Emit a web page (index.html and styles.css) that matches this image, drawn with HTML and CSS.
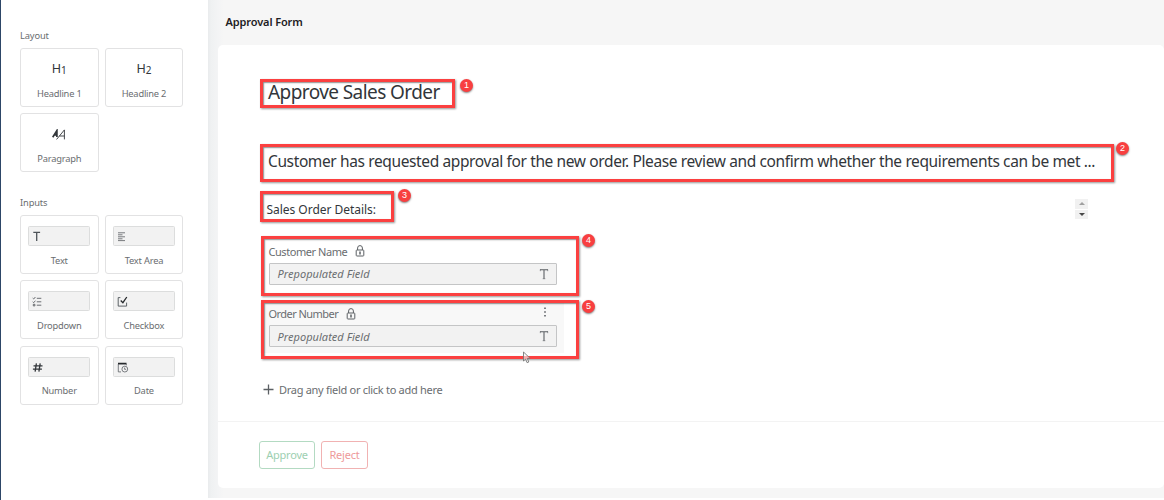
FILE: index.html
```html
<!DOCTYPE html>
<html lang="en">
<head>
<meta charset="utf-8">
<title>Approval Form</title>
<link rel="stylesheet" href="styles.css">
</head>
<body>
<div class="app">
  <aside class="palette">
    <h2 class="group-title">Layout</h2>
    <div class="tiles">
      <div class="tile"><div class="glyph">H<span class="sub">1</span></div><span class="tile-label">Headline 1</span></div>
      <div class="tile"><div class="glyph">H<span class="sub">2</span></div><span class="tile-label">Headline 2</span></div>
      <div class="tile"><div class="glyph"><svg class="para" viewBox="0 0 14 11" width="14" height="11" fill="none" stroke="#32363a"><path d="M.7 8.2 4.9 1.6V8M1.8 5.8H5" stroke-width="1.7"/><path d="M4.6 10.4 12.4.9V10.4M7.4 7h5" stroke-width=".9"/></svg></div><span class="tile-label">Paragraph</span></div>
    </div>
    <h2 class="group-title inputs-title">Inputs</h2>
    <div class="tiles">
      <div class="tile"><div class="mini"><svg viewBox="0 0 12 12" width="12" height="12" fill="none" stroke="#4d5358"><path d="M1.3 1.4h6.8M4.7 1.4v8.6" stroke-width="1.3"/></svg></div><span class="tile-label">Text</span></div>
      <div class="tile"><div class="mini"><svg viewBox="0 0 12 12" width="12" height="12" fill="none" stroke="#6a6d70" stroke-width=".9"><path d="M1 1.8h7M1 3.8h4.5M1 5.8h7M1 7.8h4.5M1 9.6h7"/></svg></div><span class="tile-label">Text Area</span></div>
      <div class="tile"><div class="mini"><svg viewBox="0 0 12 12" width="12" height="12" fill="none" stroke="#5c6064" stroke-width=".9"><path d="M.7 2.1l1 .9 1.7-2M.7 5.8l1 .9 1.7-2M4.8 2.3h4.5M4.8 5.8h4.5M4.8 9.2h4.5"/><path d="M1.3 8.3h1.6v1.6H1.3z"/></svg></div><span class="tile-label">Dropdown</span></div>
      <div class="tile"><div class="mini"><svg viewBox="0 0 12 12" width="12" height="12" fill="none" stroke="#4d5358"><path d="M3.4 1.6H1.2v8.5h8.4V6.6" stroke-width=".9"/><path d="M3.7 4.5 5.9 6.7 9.8 1" stroke="#26292c" stroke-width="1.3"/></svg></div><span class="tile-label">Checkbox</span></div>
      <div class="tile"><div class="mini"><svg viewBox="0 0 12 12" width="12" height="12" fill="none" stroke="#32363a" stroke-width="1.3"><path d="M4.4 1.3 3.1 9.7M8.2 1.3 6.9 9.7M1.5 3.9h9M.9 7.1h9"/></svg></div><span class="tile-label">Number</span></div>
      <div class="tile"><div class="mini"><svg viewBox="0 0 12 12" width="12" height="12" fill="none" stroke="#5c6064" stroke-width=".8"><path d="M4 9.9H1.3V2h8v1.4"/><path d="M1 1.5h8.5" stroke="#26292c" stroke-width="1.5"/><circle cx="7.8" cy="7.1" r="2.9"/><path d="M7.6 5.6v1.7h1.5"/></svg></div><span class="tile-label">Date</span></div>
    </div>
  </aside>

  <main class="workspace">
    <header class="topbar"><h1 class="page-title">Approval Form</h1></header>
    <section class="card">
      <div class="form">
        <div class="headline">Approve Sales Order</div>
        <div class="paragraph">Customer has requested approval for the new order. Please review and confirm whether the requirements can be met ...</div>
        <div class="details">
          <span class="details-text">Sales Order Details:</span>
          <div class="spinner"><span class="half"><i class="up"></i></span><span class="half"><i class="down"></i></span></div>
        </div>
        <div class="field">
          <div class="field-head"><span>Customer Name</span><svg viewBox="0 0 10 12" width="10" height="12" fill="none" stroke="#5c6064" stroke-width="1"><path d="M2.6 5V3a2.4 2.4 0 0 1 4.8 0v2"/><rect x="1.2" y="5" width="7.6" height="6" rx=".7"/><path d="M5 6.6v3" stroke-width="1.5"/></svg></div>
          <div class="control"><span class="placeholder">Prepopulated Field</span><svg viewBox="0 0 10 12" width="10" height="12" fill="none" stroke="#5c6064"><path d="M1 1.7h8M5 1.7v9" stroke-width="1.1"/><path d="M1.3 1.5v1.7M8.7 1.5v1.7M3.7 10.7h2.6" stroke-width=".6"/></svg></div>
        </div>
        <div class="field hovered">
          <div class="field-head"><span class="tight">Order Number</span><svg viewBox="0 0 10 12" width="10" height="12" fill="none" stroke="#5c6064" stroke-width="1"><path d="M2.6 5V3a2.4 2.4 0 0 1 4.8 0v2"/><rect x="1.2" y="5" width="7.6" height="6" rx=".7"/><path d="M5 6.6v3" stroke-width="1.5"/></svg><svg class="more" viewBox="0 0 4 10" width="4" height="10" fill="#5c6064"><path d="M1.2.5h1.6v1.6H1.2zM1.2 4.2h1.6v1.6H1.2zM1.2 7.9h1.6v1.6H1.2z"/></svg></div>
          <div class="control"><span class="placeholder">Prepopulated Field</span><svg viewBox="0 0 10 12" width="10" height="12" fill="none" stroke="#5c6064"><path d="M1 1.7h8M5 1.7v9" stroke-width="1.1"/><path d="M1.3 1.5v1.7M8.7 1.5v1.7M3.7 10.7h2.6" stroke-width=".6"/></svg></div>
        </div>
        <div class="add"><svg viewBox="0 0 11 11" width="11" height="11" stroke="#5c6064" stroke-width="1.3"><path d="M.5 5.5h10M5.5.5v10"/></svg><span>Drag any field or click to add here</span></div>
      </div>
      <footer class="actions">
        <button class="btn approve">Approve</button>
        <button class="btn reject">Reject</button>
      </footer>
    </section>
  </main>

  <div class="mark mark-1"></div><div class="badge badge-1">1</div>
  <div class="mark mark-2"></div><div class="badge badge-2">2</div>
  <div class="mark mark-3"></div><div class="badge badge-3">3</div>
  <div class="mark mark-4"></div><div class="badge badge-4">4</div>
  <div class="mark mark-5"></div><div class="badge badge-5">5</div>
  <svg class="cursor" viewBox="0 0 10 13" width="10" height="13"><path d="M1.5 1v9l2.1-1.9 1.5 3.6 1.7-.7-1.5-3.5 2.8-.2z" fill="#f5f5f5" fill-opacity=".6" stroke="#777" stroke-width=".9"/></svg>
</div>
</body>
</html>
```
FILE: styles.css
```css
* { box-sizing: border-box; }
body { margin: 0; background: #fff; font-family: "Noto Sans", "Open Sans", sans-serif; color: #32363a; }
.app { position: relative; display: flex; width: 1164px; height: 500px; overflow: hidden; }
h1, h2 { margin: 0; }
span, .headline, .paragraph { white-space: nowrap; }

.palette { width: 208px; padding: 28px 0 0 19px; border-left: 1.5px solid #2d4667; background: #fff; }
.group-title { height: 20px; font-size: 9.3px; line-height: 15px; font-weight: 400; letter-spacing: -.13px; color: #6a6d70; }
.inputs-title { margin-top: 23px; }
.tiles { display: grid; grid-template-columns: 78.5px 78.5px; grid-auto-rows: 59px; gap: 6.2px; }
.tile { display: flex; flex-direction: column; align-items: center; border: 1px solid #e2e2e3; border-radius: 3px; background: #fff; }
.glyph { height: 37.5px; padding-top: 10px; font-size: 12.6px; line-height: 19px; }
.sub { font-size: 10px; position: relative; top: 1px; }
.para { display: block; margin-top: 5px; }
.mini { width: 62px; height: 20px; margin: 10px 0 7.5px; padding: 4px 0 0 3px; border: 1px solid #dcdddd; border-radius: 1.5px; background: #f2f2f2; }
.mini svg { display: block; }
.tile-label { font-size: 9.3px; line-height: 13px; letter-spacing: -.2px; color: #6a6d70; }

.workspace { flex: 1; height: 498px; padding-left: 10px; background: linear-gradient(to right, #e9ebed 0, #eff1f2 3px, #f3f4f5 10px, #f6f6f6 16px); }
.topbar { height: 45px; padding: 14px 0 0 7.5px; }
.page-title { font-size: 11px; line-height: 16px; font-weight: 600; letter-spacing: -.12px; color: #1d2023; }
.card { display: flex; flex-direction: column; height: 443px; border-radius: 5px; background: #fff; }
.form { height: 377px; padding: 33px 0 0 42px; border-bottom: 1px solid #f3f3f3; }
.headline { height: 70px; padding-left: 8px; font-size: 19px; line-height: 29px; letter-spacing: -.58px; }
.paragraph { height: 47px; padding-left: 8px; font-size: 15.5px; line-height: 27px; letter-spacing: -.38px; }
.details { display: flex; align-items: center; justify-content: space-between; height: 29px; padding: 0 76px 0 6.5px; font-size: 12px; }
.details-text { letter-spacing: -.03px; }
.spinner { display: flex; flex-direction: column; gap: 1px; width: 13px; height: 20px; margin-top: -1px; }
.half { display: flex; flex: 1; align-items: center; justify-content: center; background: #f1f1f1; }
.up, .down { border: 3px solid transparent; }
.up { border-top: 0; border-bottom: 3.5px solid #a0a0a0; }
.down { border-bottom: 0; border-top: 3.5px solid #484848; }

.field { width: 304px; height: 55px; margin-top: 8px; padding: 10.5px 7px 0 8.5px; }
.field.hovered { height: 50px; margin-top: 16px; padding-top: 2px; background: #f8f8f8; }
.field-head { display: flex; align-items: center; gap: 8px; height: 17px; font-size: 11px; letter-spacing: -.44px; color: #6a6d70; }
.tight { letter-spacing: -.54px; }
.more { margin: -4px 10px 0 auto; }
.control { display: flex; align-items: center; justify-content: space-between; height: 22px; margin-top: 3px; padding: 0 7px 0 8px; border: 1px solid #c4c5c6; border-radius: 1px; background: #f2f2f2; font-size: 11px; letter-spacing: .04px; font-style: italic; color: #6a6d70; }
.add { display: flex; align-items: center; gap: 5px; height: 16px; margin-top: 28px; padding-left: 3px; font-size: 11px; letter-spacing: -.29px; color: #6a6d70; }

.actions { display: flex; gap: 6px; padding: 19px 0 0 41px; }
.btn { height: 28px; padding: 0; border: 1px solid; border-radius: 3px; background: #fff; font: 11px/20px "Noto Sans", "Open Sans", sans-serif; letter-spacing: -.2px; }
.approve { width: 56px; color: #9dcfb1; border-color: #b3dac2; }
.reject { width: 47px; color: #ee9a9a; border-color: #f1b2b2; }

/* Callouts laid over the form */
.mark { position: absolute; border: 3.5px solid #fb4040; box-shadow: 1px 1px 2px rgba(0,0,0,.42), inset 1px 1px 1.5px rgba(0,0,0,.45); }
.mark-1 { left: 260px; top: 79px; width: 195px; height: 29px; }
.mark-2 { left: 260px; top: 144px; width: 854px; height: 38px; }
.mark-3 { left: 260px; top: 191px; width: 134px; height: 31px; }
.mark-4 { left: 261px; top: 236px; width: 318px; height: 60px; }
.mark-5 { left: 261px; top: 300px; width: 318px; height: 59px; }
.badge { position: absolute; width: 13px; height: 13px; border-radius: 50%; background: #f83f40; color: #fff; font: 9px/13px "Liberation Sans", sans-serif; text-align: center; box-shadow: 0 1px 2px rgba(0,0,0,.5); }
.badge-1 { left: 460px; top: 79px; }
.badge-2 { left: 1116px; top: 142px; }
.badge-3 { left: 398px; top: 189px; }
.badge-4 { left: 582px; top: 234px; }
.badge-5 { left: 582px; top: 300px; }
.cursor { position: absolute; left: 522px; top: 351px; }
```
